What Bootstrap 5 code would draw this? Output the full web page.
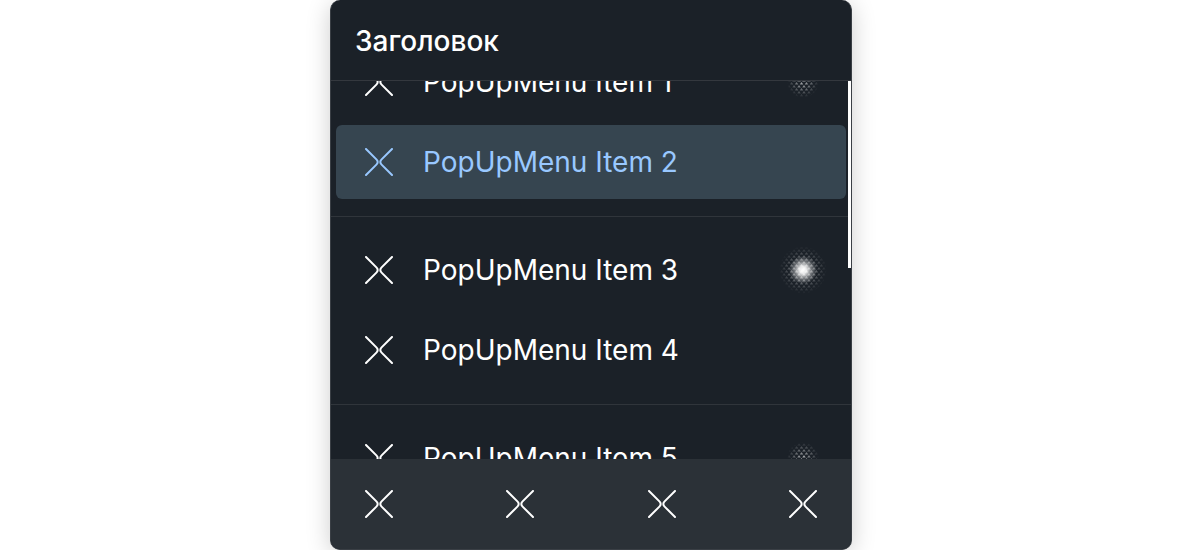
<!DOCTYPE html>
<html lang="ru">
<head>
<meta charset="utf-8">
<meta name="viewport" content="width=device-width, initial-scale=1">
<title>PopUpMenu</title>
<link href="https://cdn.jsdelivr.net/npm/bootstrap@5.3.0/dist/css/bootstrap.min.css" rel="stylesheet">
<style>
  body { font-family: Inter, "Liberation Sans", sans-serif; background: #fff; }
  .popup-stage { padding-right: 18px; }
  .popup { width: 522px; max-width: 100%; background: #1b2128; color: #fff; border: 1px solid #3a3f45; border-top: 0; border-radius: 10px; box-shadow: 0 4px 24px rgba(0,0,0,.2); }
  .popup-head { border-bottom: 1px solid #34383e; padding: 21px 24px 19px; }
  .popup-head h1 { font-size: 28px; line-height: 40px; font-weight: 500; }
  .popup-body { min-height: 0; }
  .popup-scroll { min-height: 0; overflow-y: auto; scrollbar-width: none; }
  .popup-scroll::-webkit-scrollbar { display: none; }
  .popup-cell { height: 80px; padding: 3px 5px; }
  .popup-item { color: #fff; font-size: 28px; line-height: 40px; border-radius: 6px; padding: 0 19px 0 29px; gap: 30px; }
  .popup-item.active { background: #364550; color: #99c8ff; }
  .popup-rule { height: 1px; margin: 14px 0 13px; background: #30353b; }
  .popup-thumb { top: 0; right: 0; width: 3px; height: 49.5%; background: #fff; }
  .popup-foot { background: #2b3137; height: 90px; padding: 0 34px; border-radius: 0 0 9px 9px; }
  .x-icon { width: 28px; height: 28px; flex: none; fill: none; stroke: currentColor; stroke-width: 2; stroke-linecap: round; }
  .glow { width: 48px; height: 48px; flex: none; }
</style>
</head>
<body>
<svg width="0" height="0" class="position-absolute" aria-hidden="true">
  <defs>
    <symbol id="x" viewBox="0 0 28 28"><path d="M1 1 11.4 11.4Q14 14 11.4 16.6L1 27M27 1 16.6 11.4Q14 14 16.6 16.6L27 27"/></symbol>
    <radialGradient id="halo"><stop offset="0" stop-color="#fff" stop-opacity=".6"/><stop offset=".5" stop-color="#fff" stop-opacity=".3"/><stop offset="1" stop-color="#fff" stop-opacity="0"/></radialGradient>
    <radialGradient id="faint"><stop offset="0" stop-color="#fff" stop-opacity=".65"/><stop offset="1" stop-color="#fff" stop-opacity="0"/></radialGradient>
    <radialGradient id="core"><stop offset="0" stop-color="#fff"/><stop offset=".25" stop-color="#fff" stop-opacity=".9"/><stop offset=".6" stop-color="#fff" stop-opacity=".4"/><stop offset="1" stop-color="#fff" stop-opacity="0"/></radialGradient>
    <pattern id="dots" width="5" height="6" patternUnits="userSpaceOnUse"><path d="M2.5 0 4.3 2.6H.7ZM0 3 1.8 5.6H-1.8ZM5 3 6.8 5.6H3.2Z" fill="#fff"/></pattern>
    <mask id="dither"><rect width="48" height="48" fill="url(#dots)"/></mask>
    <symbol id="glow-on" viewBox="0 0 48 48"><circle cx="24" cy="24" r="24" fill="url(#halo)" mask="url(#dither)"/><circle cx="24" cy="24" r="14" fill="url(#core)"/></symbol>
    <symbol id="glow-off" viewBox="0 0 48 48"><circle cx="24" cy="24" r="16" fill="url(#faint)" mask="url(#dither)"/></symbol>
  </defs>
</svg>
<div class="popup-stage">
<main class="popup vh-100 mx-auto d-flex flex-column">
  <header class="popup-head flex-shrink-0"><h1 class="m-0">Заголовок</h1></header>
  <div class="popup-body position-relative flex-fill d-flex flex-column">
    <nav class="popup-scroll flex-fill" id="menu">
      <div class="popup-cell"><button class="popup-item btn border-0 w-100 h-100 d-flex align-items-center text-start"><svg class="x-icon"><use href="#x"/></svg><span class="flex-fill">PopUpMenu Item 1</span><svg class="glow"><use href="#glow-off"/></svg></button></div>
      <div class="popup-cell"><button class="popup-item active btn border-0 w-100 h-100 d-flex align-items-center text-start"><svg class="x-icon"><use href="#x"/></svg><span class="flex-fill">PopUpMenu Item 2</span></button></div>
      <div class="popup-rule"></div>
      <div class="popup-cell"><button class="popup-item btn border-0 w-100 h-100 d-flex align-items-center text-start"><svg class="x-icon"><use href="#x"/></svg><span class="flex-fill">PopUpMenu Item 3</span><svg class="glow"><use href="#glow-on"/></svg></button></div>
      <div class="popup-cell"><button class="popup-item btn border-0 w-100 h-100 d-flex align-items-center text-start"><svg class="x-icon"><use href="#x"/></svg><span class="flex-fill">PopUpMenu Item 4</span></button></div>
      <div class="popup-rule"></div>
      <div class="popup-cell"><button class="popup-item btn border-0 w-100 h-100 d-flex align-items-center text-start"><svg class="x-icon"><use href="#x"/></svg><span class="flex-fill">PopUpMenu Item 5</span><svg class="glow"><use href="#glow-off"/></svg></button></div>
    </nav>
    <div class="popup-thumb position-absolute"></div>
  </div>
  <footer class="popup-foot flex-shrink-0 d-flex align-items-center justify-content-between">
    <button class="btn p-0 border-0 text-white d-flex" aria-label="1"><svg class="x-icon"><use href="#x"/></svg></button>
    <button class="btn p-0 border-0 text-white d-flex" aria-label="2"><svg class="x-icon"><use href="#x"/></svg></button>
    <button class="btn p-0 border-0 text-white d-flex" aria-label="3"><svg class="x-icon"><use href="#x"/></svg></button>
    <button class="btn p-0 border-0 text-white d-flex" aria-label="4"><svg class="x-icon"><use href="#x"/></svg></button>
  </footer>
</main>
</div>
<script src="https://cdn.jsdelivr.net/npm/bootstrap@5.3.0/dist/js/bootstrap.bundle.min.js"></script>
<script>document.getElementById('menu').scrollTop = 39;</script>
</body>
</html>
